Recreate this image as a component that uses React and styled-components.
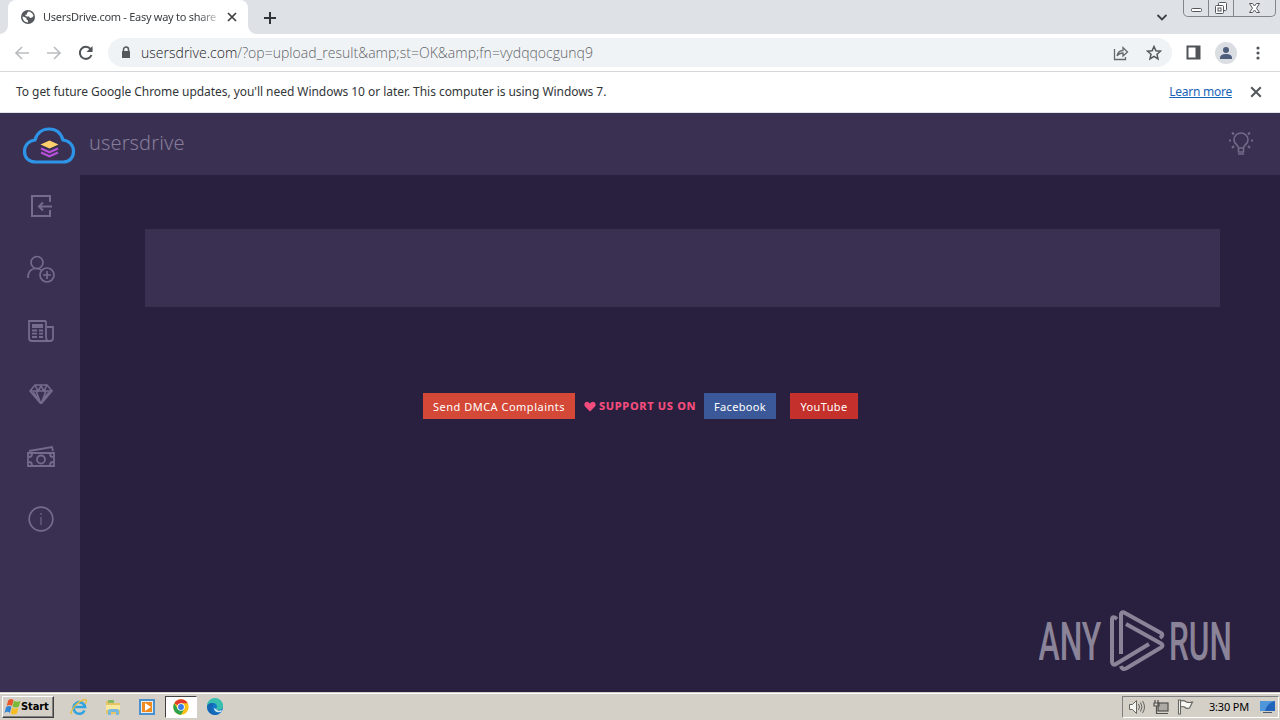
import React from 'react'
import styled, { createGlobalStyle } from 'styled-components'

const GlobalStyle = createGlobalStyle`
    * { box-sizing: border-box; }
    body {
        margin: 0;
        overflow: hidden;
        font-family: "DejaVu Sans Condensed", "DejaVu Sans", sans-serif;
    }
    svg { display: block; flex: none; }
`
const Screen = styled.div`
    width: 1280px;
    height: 720px;
    display: flex;
    flex-direction: column;
    overflow: hidden;
    background: #29203f;
`
const TabStrip = styled.div`
    height: 34px;
    flex: none;
    display: flex;
    background: #dee1e6;
    padding-left: 8px;
`
const Tab = styled.div`
    position: relative;
    width: 240px;
    display: flex;
    align-items: center;
    padding: 0 11px 0 13px;
    background: #fff;
    border-radius: 8px 8px 0 0;

    &::before, &::after {
        content: '';
        position: absolute;
        bottom: 0;
        width: 8px;
        height: 8px;
    }
    &::before {
        left: -8px;
        background: radial-gradient(circle at 0 0, transparent 7.5px, #fff 8px);
    }
    &::after {
        right: -8px;
        background: radial-gradient(circle at 100% 0, transparent 7.5px, #fff 8px);
    }
`
const TabTitle = styled.div`
    width: 178px;
    margin-left: 8px;
    white-space: nowrap;
    font: 11px/16px "Noto Sans", sans-serif;
    letter-spacing: -0.28px;
    color: #3c4043;
    mask-image: linear-gradient(90deg, #000 155px, transparent 180px);
`
const NewTab = styled.div`
    display: flex;
    align-items: center;
    margin-left: 14px;
`
const WindowSide = styled.div`
    display: flex;
    align-items: flex-start;
    margin-left: auto;
    padding-right: 4px;
`
const TabSearch = styled.div`
    padding: 12px 16px 0 0;
`
const WindowButtons = styled.div`
    display: flex;
    height: 17px;
    border: 1px solid #82858c;
    border-top: 0;
    border-radius: 0 0 5px 5px;
    overflow: hidden;
`
const WindowButton = styled.div`
    width: ${({$w}) => $w}px;
    display: flex;
    align-items: center;
    justify-content: center;
    border-left: ${({$first}) => $first ? '0' : '1px solid #82858c'};
`
const Toolbar = styled.div`
    height: 38px;
    flex: none;
    display: flex;
    align-items: center;
    background: #fff;
    border-bottom: 1px solid #d5d7da;
    padding: 0 12px 0 12px;
`
const NavButton = styled.div`
    width: 20px;
    margin-right: 12px;
    display: flex;
    justify-content: center;
`
const AddressBar = styled.div`
    width: 1064px;
    height: 29px;
    display: flex;
    align-items: center;
    gap: 17px;
    border-radius: 15px;
    background: #f0f3f5;
    padding: 0 10px 0 13px;
`
const Url = styled.div`
    flex: 1;
    margin-left: -7px;
    font: 300 14px/20px "Open Sans", sans-serif;
    letter-spacing: 0.02px;
    color: #5f6368;
    white-space: nowrap;
`
const Host = styled.span`
    color: #202124;
`
const ToolbarActions = styled.div`
    flex: 1;
    display: flex;
    align-items: center;
    justify-content: space-between;
    padding: 0 2px 0 14px;
`
const InfoBar = styled.div`
    height: 41px;
    flex: none;
    display: flex;
    align-items: center;
    background: #fff;
    border-bottom: 1px solid #e2e3e8;
    padding: 0 18px 1px 16px;
    font: 12px/16px "Noto Sans", sans-serif;
    color: #333639;
`
const InfoText = styled.div`
    flex: 1;
    white-space: nowrap;
    letter-spacing: -0.05px;
`
const InfoLink = styled.a`
    color: #1a64b8;
    text-decoration: underline;
    margin-right: 18px;
    white-space: nowrap;
    letter-spacing: -0.25px;
`
const SiteHeader = styled.header`
    height: 62px;
    flex: none;
    display: flex;
    align-items: center;
    justify-content: space-between;
    background: #3a3152;
    padding: 0 26px 0 22px;
    color: #726a88;
`
const Brand = styled.div`
    display: flex;
    align-items: center;
    gap: 12px;
    padding-top: 3px;
`
const BrandName = styled.span`
    font: 300 20px/28px "Noto Sans", sans-serif;
    letter-spacing: 0.1px;
    color: #857d9a;
    padding: 0 0 5px 1px;
`
const SiteBody = styled.div`
    height: 517px;
    flex: none;
    display: flex;
`
const Sidebar = styled.nav`
    width: 80px;
    flex: none;
    background: #3a3152;
    color: #746b8d;
`
const SideItem = styled.div`
    height: 62.6px;
    display: flex;
    align-items: center;
    justify-content: center;
    padding-left: 1px;
`
const Main = styled.main`
    flex: 1;
    display: flex;
    flex-direction: column;
    padding: 54px 60px 0 65px;
    background: #29203f;
`
const Panel = styled.div`
    height: 78px;
    flex: none;
    background: #3a3152;
`
const Links = styled.div`
    display: flex;
    align-items: center;
    height: 26px;
    margin: 86px 0 0 278px;
    font: 11px/28px "Noto Sans", sans-serif;
    white-space: nowrap;
`
const LinkButton = styled.a`
    width: ${({$w}) => $w}px;
    height: 26px;
    margin-left: ${({$gap}) => $gap || 0}px;
    text-align: center;
    color: #fff;
    background: ${({$color}) => $color};
    letter-spacing: ${({$track}) => $track || 0.35}px;
`
const Support = styled.span`
    display: flex;
    align-items: center;
    gap: 3px;
    width: 129px;
    padding-left: 9px;
    color: #f34c7c;
    font-weight: 800;
    letter-spacing: 0.65px;
`
const Watermark = styled.div`
    align-self: flex-end;
    margin: auto -13px 18px 0;
`
const Taskbar = styled.footer`
    height: 28px;
    flex: none;
    display: flex;
    align-items: center;
    background: #d4d0c8;
    border-top: 1px solid #d4d0c8;
    box-shadow: inset 0 1px #fff;
    padding: 2px 1px 2px 2px;
    color: #000;
`
const StartButton = styled.div`
    width: 52px;
    height: 22px;
    display: flex;
    align-items: center;
    gap: 0;
    padding-left: 1px;
    margin-right: 8px;
    border: 1px solid;
    border-color: #fff #404040 #404040 #fff;
    box-shadow: inset -1px -1px #808080;
    font: bold 11px/16px "DejaVu Sans Condensed", "DejaVu Sans", sans-serif;
    letter-spacing: -0.1px;
`
const TaskItem = styled.div`
    width: ${({$active}) => $active ? 32 : 34}px;
    height: 22px;
    margin-right: ${({$active}) => $active ? 1 : 0}px;
    margin-left: ${({$active}) => $active ? 1 : 0}px;
    display: flex;
    align-items: center;
    justify-content: center;
    border: 1px solid;
    border-color: ${({$active}) => $active ? '#404040 #fff #fff #404040' : 'transparent'};
    background: ${({$active}) => $active ? '#fff' : 'none'};
`
const Tray = styled.div`
    height: 22px;
    width: 157px;
    margin-left: auto;
    display: flex;
    align-items: center;
    padding: 0 2px 0 5px;
    border: 1px solid;
    border-color: #808080 #fff #fff #808080;
`
const Clock = styled.span`
    flex: 1;
    padding-left: 13px;
    font: 11px/16px "Noto Sans", sans-serif;
    letter-spacing: -0.2px;
    white-space: nowrap;
`
const TrayIcon = styled.div`
    width: ${({$w}) => $w}px;
`
const TabClose = styled.div`
    margin-left: auto;
`

function Svg({ w = 16, h = w, box, sw = 2, children, ...rest }) {
    return (
        <svg width={w} height={h} viewBox={box || `0 0 ${w} ${h}`} fill="none" stroke="currentColor" strokeWidth={sw} {...rest}>
            {children}
        </svg>
    )
}

const CloseX = ({ s, color = '#3c4043' }) => (
    <Svg w={s} box="0 0 10 10" sw={1.7} stroke={color}><path d="M1 1l8 8M9 1l-8 8" /></Svg>
)

/* sidebar drawings */
const LoginIcon = () => (
    <Svg w={24} h={26}><path d="M21 9V3H3v20h18v-6M23 13.500H10M14 9.500l-4 4 4 4" /></Svg>
)
const AddUserIcon = () => (
    <Svg w={28} h={28} sw={1.7}>
        <ellipse cx="10" cy="7.500" rx="6" ry="6" />
        <path d="M1 23c0-6 3-9.500 8-9.500 3 0 5 1 6 2" />
        <circle cx="20" cy="20" r="7" />
        <path d="M20 16v8M16 20h8" />
    </Svg>
)
const NewsIcon = () => (
    <Svg w={26} h={22} sw={1.8}>
        <path d="M18 1H1v17q0 3 3 3h18q3 0 3-3V7h-6M18 1v16q0 3 2 4" />
        <path d="M4 6h11" strokeWidth="4" />
        <path d="M4 10.5h5M11 10.5h4M4 13.7h5M11 13.7h4M4 17h5M11 17h4" />
    </Svg>
)
const DiamondIcon = () => (
    <Svg w={24} h={20} sw={1.6}>
        <path d="M6 1h12l5 6-11 13L1 7zM1 7h22M7 7l5 13 5-13M6 1l3 6 3-5 3 5 3-6M4 8l6 8M20 8l-6 8" />
    </Svg>
)
const CashIcon = () => (
    <Svg w={28} h={22} sw={1.8}>
        <path d="M1 7h26v13H1zM2 5L25 1l1 4" />
        <circle cx="14" cy="13.500" r="4" />
        <path d="M2 11q3 0 3-3M23 8q0 3 3 3M2 16q3 0 3 3M23 19q0-3 3-3" />
    </Svg>
)
const InfoIcon = () => (
    <Svg w={26} sw={1.7}><circle cx="13" cy="13" r="11.800" /><path d="M13 11v8M13 7v2" strokeWidth="1.1" /></Svg>
)
const sideIcons = [LoginIcon, AddUserIcon, NewsIcon, DiamondIcon, CashIcon, InfoIcon]

const CloudLogo = () => (
    <Svg w={54} h={38} sw={3.2}>
        <path d="M14 35C6 35 2.500 30 2.500 24.500C2.500 18 7 13.500 13 13C15 6 20.500 2 27 2C34 2 39 6 41 13C47 13.500 51.500 18 51.500 24.500C51.500 30 48 35 41 35Z" stroke="#2d94e8" />
        <path d="M19 25.500l8.500 3.800 8.500-3.800M19 21.500l8.500 3.800 8.500-3.800" stroke="#b84fda" strokeWidth="2.200" />
        <path d="M27.500 13.500l9 4-9 4-9-4z" fill="#ffd06b" stroke="none" />
    </Svg>
)
const BulbIcon = () => (
    <Svg w={26} h={28} sw={1.6}>
        <path d="M10.500 18c0-3-4.500-4-4.500-8a7 7 0 0 1 14 0c0 4-4.500 5-4.500 8zM10.500 18v4h5v-4M10 24h6" />
        <path d="M4 2.500l2 2M22 2.500l-2 2M4 18l2-2M22 18l-2-2M1 10.500h2M23 10.500h2" strokeWidth="2" />
    </Svg>
)
const AnyRunLogo = () => (
    <Svg w={194} h={64} stroke="none" fill="#8b8499" fontFamily="Roboto, sans-serif" fontSize="53.500" fontWeight="500">
        <text x="0" y="50" transform="translate(-0.5 0) scale(0.61 1)" textLength="103" lengthAdjust="spacingAndGlyphs">ANY</text>
        <text x="0" y="50" transform="translate(130 0) scale(0.61 1)" textLength="103" lengthAdjust="spacingAndGlyphs">RUN</text>
        <g fill="none" stroke="#8b8499" strokeWidth="4" strokeLinejoin="round">
            <path d="M82 44V4Q83 1 86 3L122 23Q125 25 121 28" />
            <path d="M78 9Q73 5 73 10V52Q74 56 77 54L110 34" />
            <path d="M87 14L122 33.500Q125 35.500 122 37.500L87 58.500Q83 60 82 56" />
        </g>
    </Svg>
)

/* taskbar drawings */
const WindowsFlag = () => (
    <Svg w={17} box="0 0 16 16" stroke="none">
        <path d="M4 2q3-2 5 0L7.500 7.500Q5 5.500 2.500 7.500z" fill="#e8582a" />
        <path d="M9.500 2.500q3 2 6 0l-1.500 5.500q-3 2-6 0z" fill="#7aba35" />
        <path d="M2 8.500q3-2 5 0l-1.500 5.500q-2-2-5 0z" fill="#3285d5" />
        <path d="M7.700 9q3 2 6 0l-1.500 5.500q-3 2-6 0z" fill="#f6bd25" />
    </Svg>
)
const IeIcon = () => (
    <Svg w={18} sw={2.6} stroke="#31a3df">
        <path d="M14.500 12.500A5.800 5.800 0 1 1 15 9H5" />
        <path d="M2 15Q-1 17 4 9Q10 2 15 1.500Q18 2 15 6" stroke="#e9bb3a" strokeWidth="1.300" />
    </Svg>
)
const FolderIcon = () => (
    <Svg w={18} stroke="none">
        <path d="M2 3h6l1 2h7v11H2z" fill="#e5c465" />
        <path d="M4 2h6v3H4z" fill="#83b965" />
        <path d="M2 7h14v5H2z" fill="#fae8a0" />
        <path d="M4 17v-4q0-2 2-2h7q2 0 2 2v4h-3v-3H7v3z" fill="#76b9dc" />
    </Svg>
)
const PlayerIcon = () => (
    <Svg w={18} stroke="none">
        <path d="M1 1h16v16H1z" fill="#4a91ce" />
        <path d="M3 3h12v12H3z" fill="#e5eef4" />
        <path d="M4 4h10v10H4z" fill="#f28a1c" />
        <path d="M7 5l6 4-6 4z" fill="#fff" />
    </Svg>
)
const ChromeIcon = () => (
    <Svg w={16} stroke="none">
        <circle cx="8" cy="8" r="7.700" fill="#fbc116" />
        <path d="M8 8L1.300 4.200A7.700 7.700 0 0 1 14.700 4.200H8z" fill="#e33b2e" />
        <path d="M8 8v0L4.700 10 1.300 4.200A7.700 7.700 0 0 0 8 15.700l3.400-5.900z" fill="#2da14c" />
        <circle cx="8" cy="8" r="3.800" fill="#fff" />
        <circle cx="8" cy="8" r="2.900" fill="#3a7de8" />
    </Svg>
)
const EdgeIcon = () => (
    <Svg w={18} stroke="none">
        <circle cx="9" cy="9" r="8" fill="#1278c8" />
        <path d="M1 8a8 8 0 0 1 16 0q0 4-5 4-3-1-1-3 0-4-4-4-4 0-6 3" fill="#39bfae" />
        <path d="M1 8q3-5 7-2-3 3-1 7 2 3 7 2-5 4-10 0-3-2-3-7" fill="#1766b5" />
        <path d="M8 10q0 5 7 4l1-2q-4 2-6-1" fill="#d4e8ee" />
    </Svg>
)
const taskIcons = [IeIcon, FolderIcon, PlayerIcon, ChromeIcon, EdgeIcon]

function Browser() {
    return (
        <>
            <TabStrip>
                <Tab>
                    <Svg w={14} stroke="none">
                        <circle cx="7" cy="7" r="7" fill="#55595d" />
                        <path d="M7.500 1.500L6 3v1.500H4.500V6L6 6.500h2L9 8l2-.5 1.500-1.500Q12 3 9 1.800zM2 6.500l3.500 1.500v1.500L7 10.500v2Q2 12 1.500 7z" fill="#fff" />
                    </Svg>
                    <TabTitle>UsersDrive.com - Easy way to share</TabTitle>
                    <TabClose><CloseX s={10} /></TabClose>
                </Tab>
                <NewTab><Svg w={15} stroke="#303338"><path d="M8 2v12M2 8h12" /></Svg></NewTab>
                <WindowSide>
                    <TabSearch><Svg w={12} h={9} stroke="#3c4043" sw={1.800}><path d="M2.500 3L7 7.500 11.500 3" /></Svg></TabSearch>
                    <WindowButtons>
                        <WindowButton $w={24} $first>
                            <Svg w={13} h={16} sw={1} stroke="#54575d"><rect x="1.500" y="8.500" width="10" height="3" rx="1" fill="#fff" /></Svg>
                        </WindowButton>
                        <WindowButton $w={25}>
                            <Svg w={14} h={16} sw={1} stroke="#54575d">
                                <rect x="4.500" y="2.500" width="8" height="8" rx="1" fill="#fff" />
                                <rect x="1.500" y="5.500" width="8" height="8" rx="1" fill="#fff" />
                                <rect x="4" y="8" width="3" height="3" />
                            </Svg>
                        </WindowButton>
                        <WindowButton $w={42}>
                            <Svg w={14} h={16} sw={1} stroke="#54575d">
                                <path d="M1.500 3.500h3l2 2.500 2-2.500h3L8.500 8.200l3 4.300h-3l-2-2.500-2 2.500h-3l3-4.300z" fill="#fff" />
                            </Svg>
                        </WindowButton>
                    </WindowButtons>
                </WindowSide>
            </TabStrip>
            <Toolbar>
                <NavButton><Svg w={16} stroke="#bbbdc0" sw={1.700}><path d="M15 8H2M8 2L2 8l6 6" /></Svg></NavButton>
                <NavButton><Svg w={16} stroke="#bbbdc0" sw={1.700}><path d="M1 8h13M8 2l6 6-6 6" /></Svg></NavButton>
                <NavButton><Svg w={16} stroke="#505357"><path d="M13.500 10A6 6 0 1 1 12.500 4L14 5.500" /><path d="M14.500 1v6h-6z" fill="#505357" stroke="none" /></Svg></NavButton>
                <AddressBar>
                    <Svg w={10} h={13} stroke="#54585c" sw={1.500}><path d="M2.500 6V3.500a2.500 2.500 0 0 1 5 0V6" /><rect x="1" y="5" width="8" height="7" rx=".5" fill="#54585c" stroke="none" /></Svg>
                    <Url><Host>usersdrive.com</Host>/?op=upload_result&amp;amp;st=OK&amp;amp;fn=vydqqocgunq9</Url>
                    <Svg w={16} stroke="#65696d" sw={1.300}><path d="M1.500 4v10.500h11V12M4 11q1-5.500 6-5.500V2.500l4.500 4.500-4.500 4V8Q6 8 4 11z" /></Svg>
                    <Svg w={16} stroke="#54585c" sw={1.500}><path d="M8 1.500l1.900 4.300 4.600.4-3.500 3.100 1 4.600-4-2.500-4 2.500 1-4.600-3.500-3.100 4.600-.4z" /></Svg>
                </AddressBar>
                <ToolbarActions>
                    <Svg w={15} stroke="#505357"><rect x="1.500" y="1.500" width="12" height="12" /><path d="M11.500 1v13" strokeWidth="4" /></Svg>
                    <Svg w={22} stroke="none"><circle cx="11" cy="11" r="11" fill="#dadde2" /><circle cx="11" cy="8" r="3" fill="#4d5d7b" /><path d="M5 16q0-4 6-4t6 4v1H5z" fill="#4d5d7b" /></Svg>
                    <Svg w={16} stroke="none" fill="#54585c"><circle cx="8" cy="3" r="1.600" /><circle cx="8" cy="8" r="1.600" /><circle cx="8" cy="13" r="1.600" /></Svg>
                </ToolbarActions>
            </Toolbar>
            <InfoBar>
                <InfoText>To get future Google Chrome updates, you'll need Windows 10 or later. This computer is using Windows 7.</InfoText>
                <InfoLink>Learn more</InfoLink>
                <CloseX s={12} color="#54585c" />
            </InfoBar>
        </>
    )
}

function Site() {
    return (
        <>
            <SiteHeader>
                <Brand>
                    <CloudLogo />
                    <BrandName>usersdrive</BrandName>
                </Brand>
                <BulbIcon />
            </SiteHeader>
            <SiteBody>
                <Sidebar>
                    {sideIcons.map((Icon, i) => <SideItem key={i}><Icon /></SideItem>)}
                </Sidebar>
                <Main>
                    <Panel />
                    <Links>
                        <LinkButton $w={152} $color="#d34836" $track={0.5}>Send DMCA Complaints</LinkButton>
                        <Support>
                            <Svg w={12} h={11} stroke="none" fill="#f34c7c"><path d="M6 10.500L1 5.500Q-.5 3 1.500 1.200 4 0 6 2.500 8 0 10.500 1.200 12.500 3 11 5.500z" /></Svg>
                            SUPPORT US ON
                        </Support>
                        <LinkButton $w={72} $color="#3b5998">Facebook</LinkButton>
                        <LinkButton $w={68} $color="#c4302b" $gap={14}>YouTube</LinkButton>
                    </Links>
                    <Watermark><AnyRunLogo /></Watermark>
                </Main>
            </SiteBody>
        </>
    )
}

function App() {
  return (
    <Screen>
        <GlobalStyle />
        <Browser />
        <Site />
        <Taskbar>
            <StartButton><WindowsFlag />Start</StartButton>
            {taskIcons.map((Icon, i) => <TaskItem key={i} $active={Icon === ChromeIcon}><Icon /></TaskItem>)}
            <Tray>
                <TrayIcon $w={25}>
                    <Svg w={18} h={16} sw={1} stroke="#67655f"><path d="M1.500 5.500h3l4-4v13l-4-4h-3z" fill="#f5f5f2" /><path d="M10.500 5q2 3 0 6M12.500 3.500q3 4.500 0 9M14.500 2q4 6 0 12" /></Svg>
                </TrayIcon>
                <TrayIcon $w={24}>
                    <Svg w={17} h={16} sw={1.200} stroke="#54524e"><rect x="5" y="4" width="10" height="8" fill="#aaa9a4" /><path d="M6 14.500h9M2 1v3M5 1v3M1 4h5v3H1zM3.500 7v7.500h3" /></Svg>
                </TrayIcon>
                <TrayIcon $w={19}>
                    <Svg w={17} h={16} sw={1.100} stroke="#67655f"><path d="M1.500 1v14h2V1zM3.500 2q3-1 6 1 2 1 6 0l-3 6q-3 1-5-1-2-1-4 0" fill="#f8f8f5" /></Svg>
                </TrayIcon>
                <Clock>3:30 PM</Clock>
                <Svg w={17} h={14} stroke="none"><path d="M1 1h15v10H1z" fill="#2065bb" /><path d="M1 1h15Q8 3 6 11H1z" fill="#4f96db" /><path d="M4 12h9v1H4z" fill="#4b5a6b" /></Svg>
            </Tray>
        </Taskbar>
    </Screen>
  )
}

export default App
